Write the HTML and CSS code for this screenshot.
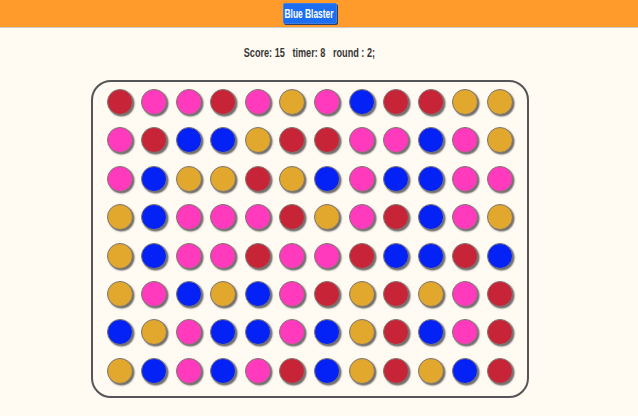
FILE: index.html
```html
<!DOCTYPE html>
<html lang="en">
<head>
    <meta charset="UTF-8">
    <meta name="viewport" content="width=device-width, initial-scale=1.0">
    <title>Blue Blaster</title>
    <link rel="stylesheet" href="styles.css">
</head>
<body>
    <header class="top-bar">
        <div class="top-inner">
            <button class="title-btn"><span class="narrow">Blue Blaster</span></button>
        </div>
    </header>

    <main class="game">
        <div class="stats">
            <span class="narrow">Score: <span id="score">15</span>&nbsp;&nbsp; timer: <span id="timer">8</span>&nbsp;&nbsp; round : <span id="round">2</span>;</span>
        </div>

        <div class="board" id="board"></div>
    </main>

    <script>
        // r = red, p = pink, b = blue, g = gold
        const layout = [
            'rpprpgpbrrgg',
            'prbbgrrppbpg',
            'pbggrgbpbbpp',
            'gbppprgprbpg',
            'gbpprpprbbrb',
            'gpbgbprgrgpr',
            'bgpbbpbgrbpr',
            'gbpbprbgrgbr'
        ];
        const names = { r: 'red', p: 'pink', b: 'blue', g: 'gold' };

        const board = document.getElementById('board');
        layout.forEach(function (row) {
            row.split('').forEach(function (c) {
                const dot = document.createElement('div');
                dot.className = 'dot ' + names[c];
                board.appendChild(dot);
            });
        });
    </script>
</body>
</html>
```

FILE: styles.css
```css
* {
    margin: 0;
    padding: 0;
    box-sizing: border-box;
}

body {
    font-family: 'Liberation Sans', Arial, sans-serif;
    background: #fffbf2;
    color: #363636;
}

/* the original font is a very narrow display face */
.narrow {
    display: inline-block;
    white-space: nowrap;
    transform: scaleX(0.76);
}

.top-bar {
    background: #ff9b2b;
    height: 28px;
    border-bottom: 1px solid #cfcbc4;
}

.top-inner {
    width: 619px;
    display: flex;
    justify-content: center;
    padding-top: 3px;
}

.title-btn {
    font-family: 'Liberation Sans', Arial, sans-serif;
    font-weight: bold;
    font-size: 12px;
    color: #ffffff;
    background: #1b6ef4;
    border: 1px solid #3f7fe0;
    border-radius: 2px;
    width: 54px;
    height: 21px;
    display: flex;
    align-items: center;
    justify-content: center;
    box-shadow: 1px 1px 0 #2a3f6a;
}

.title-btn .narrow {
    transform: scaleX(0.7);
}

.game {
    width: 619px;
    display: flex;
    flex-direction: column;
    align-items: center;
}

.stats {
    font-weight: bold;
    font-size: 12px;
    margin-top: 18px;
    height: 15px;
    line-height: 15px;
}

.board {
    margin-top: 19px;
    width: 438px;
    height: 318px;
    border: 2px solid #555555;
    border-radius: 20px;
    padding: 7px 0 0 14px;
    display: grid;
    grid-template-columns: repeat(12, 26px);
    grid-auto-rows: 26px;
    column-gap: 8.6px;
    row-gap: 12.4px;
}

.dot {
    width: 26px;
    height: 26px;
    border-radius: 50%;
    border: 1px solid #7d7670;
    box-shadow: 1.5px 1.5px 1.5px #6e6e6e;
}

.red {
    background: #c72437;
}

.pink {
    background: #ff3abd;
}

.blue {
    background: #0422f6;
}

.gold {
    background: #e2a82e;
}
```
